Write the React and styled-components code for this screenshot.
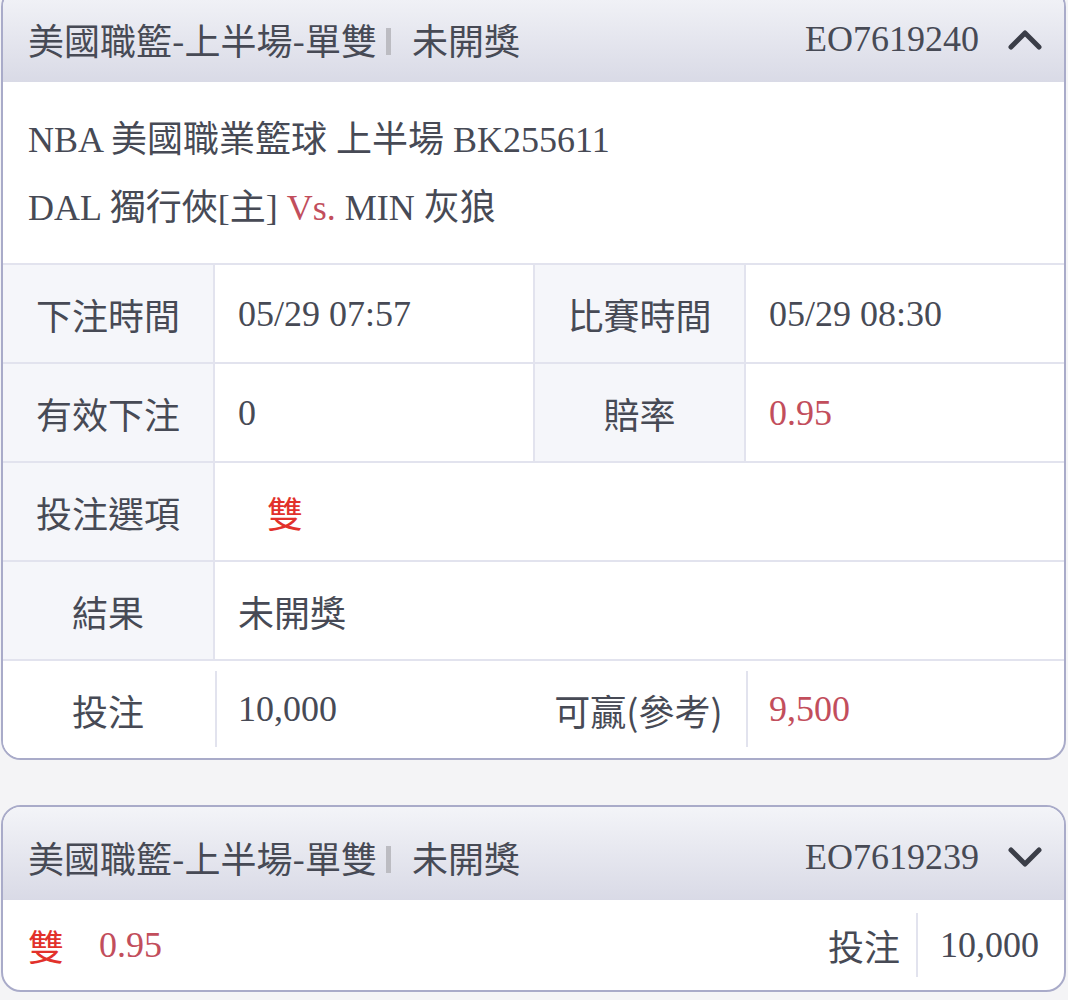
import React from "react"
import styled, { createGlobalStyle } from "styled-components"

const GlobalStyle = createGlobalStyle`
  html, body {
    margin: 0;
    padding: 0;
    background: #f4f4f6;
  }
  * {
    box-sizing: border-box;
  }
`

const SANS = `"Noto Sans CJK TC", "Noto Sans", sans-serif`
const SERIF = `"Liberation Serif", "Noto Sans CJK TC", serif`
const LINE = "#e2e3ee"
const TEXT = "#474a55"
const ODDS = "#c24e5c"
const PICK = "#e2312b"

const Page = styled.div`
  width: 1068px;
  height: 1000px;
  overflow: hidden;
  padding: 0 2px 0 1px;
`

const Card = styled.div`
  background: #fff;
  border: 2px solid #a9abc9;
  border-radius: 20px;
  overflow: hidden;
  margin-top: ${p => p.$offset || 0}px;
  margin-bottom: 45px;
`

const Header = styled.div`
  height: 93px;
  padding: 6px 22px 0 25px;
  display: flex;
  align-items: center;
  justify-content: space-between;
  background: linear-gradient(#f3f4f8, #d9dae6);
  color: ${TEXT};
`

const Title = styled.div`
  font-family: ${SANS};
  font-size: 36px;
  line-height: 40px;
  display: flex;
  align-items: center;
`

const Bar = styled.span`
  display: inline-block;
  width: 5px;
  height: 27px;
  background: #bcbcc2;
  margin: 6px 21px 0 9px;
`

const OrderNo = styled.div`
  display: flex;
  align-items: center;
  gap: 29px;
  font-family: ${SERIF};
  font-size: 36px;
  line-height: 40px;
`

const Chevron = ({ up }) => (
  <svg width="34" height="22" viewBox="0 0 34 22">
    <polyline
      points={up ? "3,19 17,5 31,19" : "3,4 17,18 31,4"}
      fill="none"
      stroke="#3b3e48"
      strokeWidth="5"
      strokeLinecap="round"
      strokeLinejoin="round"
    />
  </svg>
)

const Info = styled.div`
  padding: 24px 25px 21px;
  font-family: ${SERIF};
  font-size: 36px;
  line-height: 68px;
  color: ${TEXT};
`

const Red = styled.span`
  color: ${ODDS};
`

const Row = styled.div`
  display: grid;
  grid-template-columns: 212px 318px 213px 1fr;
  border-top: 2px solid ${LINE};
  min-height: 99px;
`

const Label = styled.div`
  display: flex;
  align-items: center;
  justify-content: center;
  font-family: ${SANS};
  font-size: 36px;
  color: ${TEXT};
  background: ${p => (p.$plain ? "#fff" : "#f5f6fa")};
  border-right: 2px solid ${p => (p.$plain ? "transparent" : LINE)};
  border-left: ${p => (p.$mid && !p.$plain ? `2px solid ${LINE}` : "none")};
`

const Value = styled.div`
  display: flex;
  align-items: center;
  padding-left: ${p => (p.$plain ? 21 : 23)}px;
  font-family: ${SERIF};
  font-size: 36px;
  color: ${p => (p.$odds ? ODDS : TEXT)};
  grid-column: ${p => (p.$span ? "2 / -1" : "auto")};
  border-left: ${p => (p.$plain ? `2px solid ${LINE}` : "none")};
  margin: ${p => (p.$plain ? "10px 0 11px" : "0")};
`

const Pick = styled.span`
  font-family: ${SANS};
  color: ${p => (p.$muted ? TEXT : PICK)};
  padding-left: ${p => p.$indent || 0}px;
`

const Summary = styled.div`
  height: 90px;
  padding: 0 25px;
  display: flex;
  align-items: center;
  justify-content: space-between;
  font-size: 36px;
`

const SummaryLeft = styled.div`
  display: flex;
  align-items: center;
  gap: 35px;
  font-family: ${SERIF};
  color: ${ODDS};
`

const SummaryRight = styled.div`
  display: flex;
  align-items: center;
  color: ${TEXT};
`

const StakeLabel = styled.span`
  font-family: ${SANS};
  padding-right: 16px;
`

const StakeValue = styled.span`
  font-family: ${SERIF};
  border-left: 2px solid ${LINE};
  padding: 10px 0 10px 22px;
  line-height: 44px;
`

const CardHeader = ({ no, up }) => (
  <Header>
    <Title>
      美國職籃-上半場-單雙<Bar />未開獎
    </Title>
    <OrderNo>
      {no}
      <Chevron up={up} />
    </OrderNo>
  </Header>
)

const App = () => {
  return (
    <Page>
      <GlobalStyle />

      <Card $offset={-13}>
        <CardHeader no="EO7619240" up />
        <Info>
          <div>NBA 美國職業籃球 上半場 BK255611</div>
          <div>
            DAL 獨行俠[主] <Red>Vs.</Red> MIN 灰狼
          </div>
        </Info>

        <Row>
          <Label>下注時間</Label>
          <Value>05/29 07:57</Value>
          <Label $mid>比賽時間</Label>
          <Value>05/29 08:30</Value>
        </Row>
        <Row>
          <Label>有效下注</Label>
          <Value>0</Value>
          <Label $mid>賠率</Label>
          <Value $odds>0.95</Value>
        </Row>
        <Row>
          <Label>投注選項</Label>
          <Value $span>
            <Pick $indent={29}>雙</Pick>
          </Value>
        </Row>
        <Row>
          <Label>結果</Label>
          <Value $span>
            <Pick $muted>未開獎</Pick>
          </Value>
        </Row>
        <Row>
          <Label $plain>投注</Label>
          <Value $plain>10,000</Value>
          <Label $plain $mid>可贏(參考)</Label>
          <Value $plain $odds>9,500</Value>
        </Row>
      </Card>

      <Card>
        <CardHeader no="EO7619239" />
        <Summary>
          <SummaryLeft>
            <Pick>雙</Pick>
            <span>0.95</span>
          </SummaryLeft>
          <SummaryRight>
            <StakeLabel>投注</StakeLabel>
            <StakeValue>10,000</StakeValue>
          </SummaryRight>
        </Summary>
      </Card>
    </Page>
  )
}

export default App
